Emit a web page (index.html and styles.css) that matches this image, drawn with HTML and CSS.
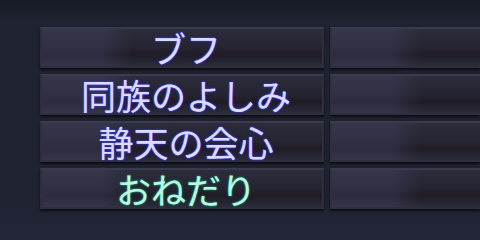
FILE: index.html
```html
<!DOCTYPE html>
<html lang="ja">
<head>
<meta charset="utf-8">
<link rel="stylesheet" href="styles.css">
</head>
<body>
<div class="list">
  <div class="row"><div class="cell name">ブフ</div><div class="cell side"></div></div>
  <div class="row"><div class="cell name">同族のよしみ</div><div class="cell side"></div></div>
  <div class="row"><div class="cell name">静天の会心</div><div class="cell side"></div></div>
  <div class="row"><div class="cell name special">おねだり</div><div class="cell side"></div></div>
</div>
</body>
</html>
```
FILE: styles.css
```css
html, body {
  margin: 0;
  width: 480px;
  height: 240px;
  overflow: hidden;
}
body {
  background: linear-gradient(180deg, #171a24 0px, #1f2230 20px, #1f2231 200px, #242738 240px);
  font-family: "Noto Sans CJK JP", "Noto Sans", sans-serif;
}
.list {
  display: flex;
  flex-direction: column;
  gap: 6px;
  padding: 27px 0 0 40px;
}
.row {
  display: grid;
  grid-template-columns: 284px 1fr;
  gap: 6px;
  height: 41px;
}
.cell {
  box-sizing: border-box;
  border: 2px solid #2e2e3e;
  border-top-color: #3a3b4d;
  background:
    linear-gradient(90deg, rgba(72,72,105,0.35) 0px, rgba(72,72,105,0.35) 60px, rgba(0,0,0,0) 90px),
    linear-gradient(180deg, #2c2c3c 0%, #252430 50%, #1f1c26 70%, #2b2b3b 100%);
  box-shadow: 0 2px 2px rgba(0,0,0,0.6);
}
.side {
  border-right: 0;
}
.name {
  display: flex;
  align-items: center;
  justify-content: center;
  padding-left: 8px;
  font-size: 35px;
  font-weight: 400;
  line-height: 1;
  color: #dcdaff;
  text-shadow: 0 0 1px #4848f0, 0 0 2px #4040e0, 0 0 3px #2a2aa8;
  white-space: nowrap;
}
.special {
  color: #bcf8de;
  text-shadow: 0 0 1px #24a08c, 0 0 2px #1e8a78, 0 0 3px #15665a;
}
```
